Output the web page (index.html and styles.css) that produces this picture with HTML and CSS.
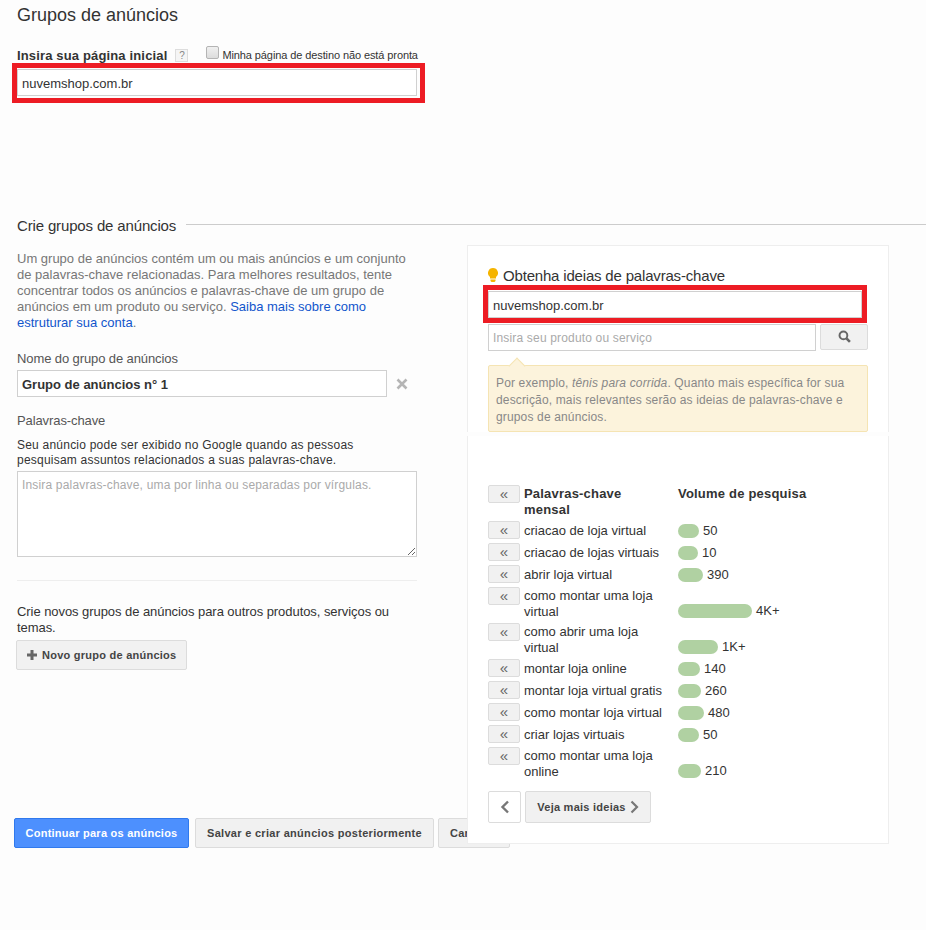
FILE: index.html
```html
<!DOCTYPE html>
<html>

<head>
    <meta charset="UTF-8">
    <title>Grupos de anúncios</title>
    <link rel="stylesheet" href="styles.css">
</head>

<body>
    <div id="wrap">
        <h1 class="page-title">Grupos de anúncios</h1>

        <div class="home-row">
            <label class="home-label">Insira sua página inicial</label>
            <span class="help">?</span>
            <input class="check" type="checkbox">
            <span class="check-label">Minha página de destino não está pronta</span>
        </div>
        <div class="red-box home-box">
            <input class="field" type="text" value="nuvemshop.com.br">
        </div>

        <div class="section-head">
            <h2>Crie grupos de anúncios</h2>
            <div class="section-line"></div>
        </div>

        <div class="columns">
            <!-- coluna esquerda -->
            <div class="form-col">
                <p class="intro">Um grupo de anúncios contém um ou mais anúncios e um conjunto de palavras-chave relacionadas. Para melhores resultados, tente concentrar todos os anúncios e palavras-chave de um grupo de anúncios em um produto ou serviço. <a href="#">Saiba mais sobre como estruturar sua conta</a>.</p>

                <div class="field-title name-title">Nome do grupo de anúncios</div>
                <div class="name-row">
                    <input class="field name-field" type="text" value="Grupo de anúncios n° 1">
                    <svg class="close-icon" width="12" height="12" viewBox="0 0 12 12">
                        <path d="M1.5 1.5l9 9M10.5 1.5l-9 9" stroke="#b5b5b5" stroke-width="2.6" fill="none"/>
                    </svg>
                </div>

                <div class="field-title kw-title">Palavras-chave</div>
                <p class="kw-desc">Seu anúncio pode ser exibido no Google quando as pessoas pesquisam assuntos relacionados a suas palavras-chave.</p>
                <textarea class="kw-area" placeholder="Insira palavras-chave, uma por linha ou separadas por vírgulas."></textarea>

                <div class="divider"></div>

                <p class="new-text">Crie novos grupos de anúncios para outros produtos, serviços ou temas.</p>
                <button class="btn btn-new">
                    <svg width="10" height="10" viewBox="0 0 10 10"><path d="M3.5 0h3v3.5H10v3H6.5V10h-3V6.5H0v-3h3.5z" fill="#666"/></svg>
                    Novo grupo de anúncios
                </button>

                <div class="actions">
                    <button class="btn btn-primary">Continuar para os anúncios</button>
                    <button class="btn btn-save">Salvar e criar anúncios posteriormente</button>
                    <button class="btn btn-cancel">Cancelar</button>
                </div>
            </div>

            <!-- painel de ideias -->
            <div class="ideas">
                <div class="ideas-top">
                    <div class="ideas-title">
                        <svg width="10" height="14" viewBox="0 0 10 14">
                            <path d="M5 0a5 5 0 0 1 3 9v1.5H2V9a5 5 0 0 1 3-9z" fill="#f5b400"/>
                            <path d="M2.5 11.5h5V13l-1 1h-3l-1-1z" fill="#f5b400"/>
                        </svg>
                        Obtenha ideias de palavras-chave
                    </div>
                    <div class="red-box ideas-box">
                        <input class="field" type="text" value="nuvemshop.com.br">
                    </div>
                    <div class="search-row">
                        <input class="field search-field" type="text" placeholder="Insira seu produto ou serviço">
                        <button class="btn btn-search">
                            <svg width="13" height="13" viewBox="0 0 12 12">
                                <circle cx="5" cy="5" r="3.6" stroke="#666" stroke-width="1.8" fill="none"/>
                                <path d="M7.8 7.8L11 11" stroke="#666" stroke-width="2.4"/>
                            </svg>
                        </button>
                    </div>
                    <div class="tip">Por exemplo, <em>tênis para corrida</em>. Quanto mais específica for sua descrição, mais relevantes serão as ideias de palavras-chave e grupos de anúncios.</div>
                </div>

                <div class="ideas-bottom">
                    <div class="kw-row kw-head">
                        <button class="btn add">«</button>
                        <div class="kw-name">Palavras-chave mensal</div>
                        <div class="kw-vol-title">Volume de pesquisa</div>
                    </div>
                    <div class="kw-row">
                        <button class="btn add">«</button>
                        <div class="kw-name">criacao de loja virtual</div>
                        <div class="kw-vol"><span class="bar" style="width:21px"></span>50</div>
                    </div>
                    <div class="kw-row">
                        <button class="btn add">«</button>
                        <div class="kw-name">criacao de lojas virtuais</div>
                        <div class="kw-vol"><span class="bar" style="width:20px"></span>10</div>
                    </div>
                    <div class="kw-row">
                        <button class="btn add">«</button>
                        <div class="kw-name">abrir loja virtual</div>
                        <div class="kw-vol"><span class="bar" style="width:25px"></span>390</div>
                    </div>
                    <div class="kw-row">
                        <button class="btn add">«</button>
                        <div class="kw-name">como montar uma loja virtual</div>
                        <div class="kw-vol"><span class="bar" style="width:74px"></span>4K+</div>
                    </div>
                    <div class="kw-row">
                        <button class="btn add">«</button>
                        <div class="kw-name">como abrir uma loja virtual</div>
                        <div class="kw-vol"><span class="bar" style="width:40px"></span>1K+</div>
                    </div>
                    <div class="kw-row">
                        <button class="btn add">«</button>
                        <div class="kw-name">montar loja online</div>
                        <div class="kw-vol"><span class="bar" style="width:22px"></span>140</div>
                    </div>
                    <div class="kw-row">
                        <button class="btn add">«</button>
                        <div class="kw-name">montar loja virtual gratis</div>
                        <div class="kw-vol"><span class="bar" style="width:23px"></span>260</div>
                    </div>
                    <div class="kw-row">
                        <button class="btn add">«</button>
                        <div class="kw-name">como montar loja virtual</div>
                        <div class="kw-vol"><span class="bar" style="width:26px"></span>480</div>
                    </div>
                    <div class="kw-row">
                        <button class="btn add">«</button>
                        <div class="kw-name">criar lojas virtuais</div>
                        <div class="kw-vol"><span class="bar" style="width:21px"></span>50</div>
                    </div>
                    <div class="kw-row">
                        <button class="btn add">«</button>
                        <div class="kw-name">como montar uma loja online</div>
                        <div class="kw-vol"><span class="bar" style="width:23px"></span>210</div>
                    </div>

                    <div class="pager">
                        <button class="btn btn-prev">
                            <svg width="10" height="14" viewBox="0 0 10 14"><path d="M8 1.5L2.5 7 8 12.5" stroke="#777" stroke-width="2.4" fill="none"/></svg>
                        </button>
                        <button class="btn btn-next">Veja mais ideias
                            <svg width="9" height="14" viewBox="0 0 9 14"><path d="M1.5 1.5L7 7l-5.5 5.5" stroke="#777" stroke-width="2.2" fill="none"/></svg>
                        </button>
                    </div>
                </div>
            </div>
        </div>
    </div>
</body>

</html>
```

FILE: styles.css
```css
* {
    box-sizing: border-box;
}

body {
    margin: 0;
    background-color: #fdfdfd;
    color: #333;
    font-family: "Liberation Sans", Arial, sans-serif;
    font-size: 13px;
}

#wrap {
    height: 930px;
    padding-left: 17px;
    overflow: hidden;
}

.page-title {
    margin: 0;
    padding-top: 5px;
    height: 46px;
    font-size: 18px;
    line-height: 20px;
    font-weight: normal;
    color: #333;
}

.home-row {
    display: flex;
    align-items: center;
    height: 18px;
}

.home-label {
    font-size: 13px;
    font-weight: bold;
    letter-spacing: 0.15px;
}

.help {
    width: 13px;
    height: 13px;
    margin-left: 8px;
    border: 1px solid #ddd;
    background-color: #f5f5f5;
    color: #888;
    font-size: 10px;
    line-height: 11px;
    text-align: center;
}

.check {
    appearance: none;
    width: 13px;
    height: 13px;
    margin: -5px 0 0 18px;
    border: 1px solid #b4b4b4;
    border-radius: 2px;
    background: linear-gradient(#f0f0f0, #dcdcdc);
}

.check-label {
    margin-left: 3px;
    font-size: 11px;
    letter-spacing: -0.1px;
}

.red-box {
    border: 5px solid #ed1c24;
}

.red-box .field {
    padding-top: 2px;
}

.home-box {
    width: 413px;
    height: 40px;
    margin: -1px 0 0 -5px;
    padding: 1px 3px 2px 0;
}

.field {
    display: block;
    width: 100%;
    height: 27px;
    padding: 0 4px;
    border: 1px solid #d0d0d0;
    border-radius: 0;
    outline: none;
    background-color: #fff;
    color: #333;
    font-family: inherit;
    font-size: 13px;
}

.section-head {
    display: flex;
    align-items: center;
    margin-top: 113px;
    height: 20px;
}

.section-head h2 {
    margin: -2px 0 0;
    font-size: 15px;
    font-weight: normal;
    letter-spacing: -0.15px;
    color: #333;
}

.section-line {
    flex: 1;
    height: 1px;
    margin: -3px 0 0 10px;
    background-color: #ccc;
}

.columns {
    display: flex;
    align-items: flex-start;
}

.form-col {
    flex: none;
    width: 400px;
    padding-top: 15px;
}

.intro {
    margin: 0;
    line-height: 16px;
    color: #777;
}

.intro a {
    color: #15c;
    text-decoration: none;
}

.field-title {
    font-size: 13px;
    line-height: 16px;
    letter-spacing: -0.1px;
    color: #555;
}

.name-title {
    margin-top: 20px;
}

.name-row {
    display: flex;
    align-items: center;
    margin-top: 3px;
}

.name-field {
    width: 370px;
    padding-top: 1px;
    font-weight: bold;
}

.close-icon {
    margin-left: 9px;
}

.kw-title {
    margin-top: 16px;
}

.kw-desc {
    margin: 9px 0 0;
    font-size: 12px;
    line-height: 15px;
    letter-spacing: 0.22px;
}

.kw-area {
    display: block;
    width: 400px;
    height: 86px;
    margin-top: 3px;
    padding: 6px 4px;
    border: 1px solid #d0d0d0;
    border-radius: 0;
    outline: none;
    background-color: #fff;
    font-family: inherit;
    font-size: 12px;
    letter-spacing: 0.17px;
}

.kw-area::placeholder,
.field::placeholder {
    color: #aaa;
}

.divider {
    height: 1px;
    margin-top: 23px;
    background-color: #eee;
}

.new-text {
    margin: 23px 0 0;
    line-height: 16px;
    letter-spacing: -0.06px;
}

.btn {
    border: 1px solid #dcdcdc;
    border-radius: 2px;
    background-color: #f1f1f1;
    color: #444;
    font-family: inherit;
    font-size: 11px;
    font-weight: bold;
    letter-spacing: 0.25px;
    padding: 0;
}

.btn-new {
    display: flex;
    align-items: center;
    gap: 5px;
    width: 171px;
    height: 30px;
    margin: 4px 0 0 -1px;
    padding-left: 10px;
}

.actions {
    display: flex;
    gap: 4px;
    width: 600px;
    margin: 148px 0 0 -3px;
}

.actions .btn {
    flex: none;
    height: 30px;
}

.btn-primary {
    width: 175px;
    border-color: #3079ed;
    background-color: #4d90fe;
    color: #fff;
}

.actions .btn-save {
    width: 239px;
    margin-left: 2px;
    letter-spacing: 0.3px;
}

.actions .btn-cancel {
    width: 72px;
    padding-left: 11px;
    text-align: left;
}

.ideas {
    position: relative;
    z-index: 1;
    flex: none;
    width: 422px;
    margin: 9px 0 0 50px;
}

.ideas-top,
.ideas-bottom {
    background-color: #fff;
    border-left: 1px solid #eee;
    border-right: 1px solid #eee;
    padding-left: 20px;
}

.ideas-top {
    height: 187px;
    border-top: 1px solid #eee;
}

.ideas-bottom {
    height: 408px;
    margin-top: 4px;
    padding-top: 49px;
    border-bottom: 1px solid #eee;
}

.ideas-title {
    display: flex;
    align-items: center;
    gap: 5px;
    margin-top: 20px;
    height: 18px;
    font-size: 15px;
    letter-spacing: -0.18px;
}

.ideas-box {
    width: 384px;
    height: 38px;
    margin: 1px 0 0 -5px;
    padding: 1px 0 0;
}

.search-row {
    display: flex;
    margin-top: 1px;
}

.search-field {
    width: 328px;
    font-size: 12px;
    letter-spacing: 0.17px;
}

.btn-search {
    width: 48px;
    height: 26px;
    margin-left: 4px;
}

.tip {
    position: relative;
    width: 380px;
    height: 67px;
    margin-top: 14px;
    padding: 9px 7px;
    border: 1px solid #f5e4b3;
    border-radius: 2px;
    background-color: #fcf3dc;
    color: #888;
    font-size: 12px;
    line-height: 17px;
    letter-spacing: 0.15px;
}

/* seta do balao */
.tip::before {
    content: "";
    position: absolute;
    top: -6px;
    left: 22px;
    width: 11px;
    height: 11px;
    transform: rotate(45deg);
    background-color: #fcf3dc;
    border-top: 1px solid #f5e4b3;
    border-left: 1px solid #f5e4b3;
}

.kw-row {
    display: flex;
    padding-bottom: 4px;
    line-height: 16px;
}

.add {
    flex: none;
    width: 32px;
    height: 18px;
    color: #666;
    font-size: 15px;
    font-weight: normal;
    line-height: 14px;
}

.kw-name {
    flex: none;
    display: flex;
    align-items: center;
    width: 140px;
    min-height: 18px;
    margin: 1px 10px -1px 4px;
}

.kw-vol {
    display: flex;
    align-items: center;
    gap: 4px;
    align-self: flex-end;
    height: 16px;
    margin-left: 4px;
}

.kw-head {
    font-weight: bold;
    letter-spacing: 0.2px;
}

.kw-vol-title {
    margin: 1px 0 0 4px;
    font-weight: bold;
}

.bar {
    display: block;
    height: 14px;
    border-radius: 7px;
    background-color: #b0d1a2;
}

.pager {
    display: flex;
    gap: 4px;
    margin-top: 8px;
}

.btn-prev {
    display: flex;
    align-items: center;
    justify-content: center;
    width: 33px;
    height: 32px;
    background-color: #fff;
}

.btn-next {
    display: flex;
    align-items: center;
    justify-content: center;
    gap: 4px;
    width: 126px;
    height: 32px;
}
```
